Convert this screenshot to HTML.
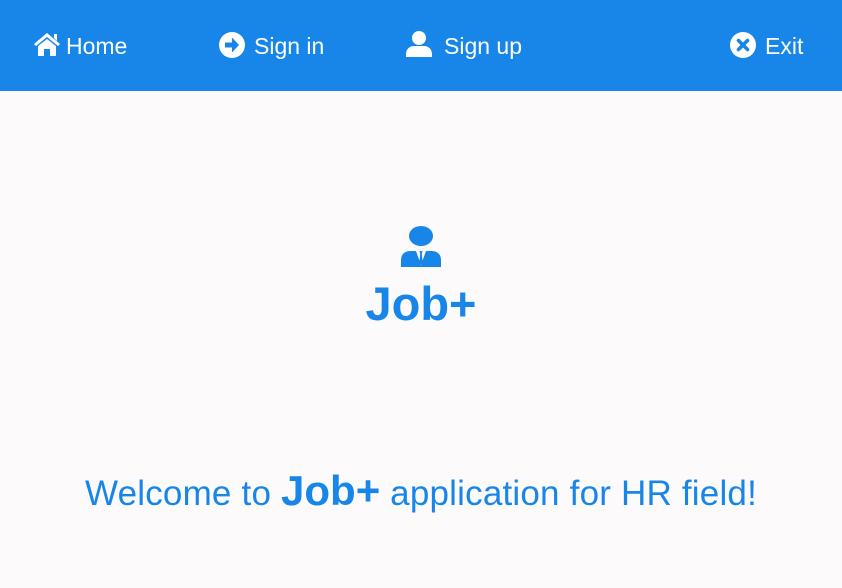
<!DOCTYPE html>
<html><head><meta charset="utf-8"><style>
*{margin:0;padding:0;box-sizing:border-box}
body{width:842px;height:588px;background:#fcfafb;font-family:"Liberation Sans",sans-serif;position:relative;overflow:hidden}
.nav{position:absolute;left:0;top:0;width:842px;height:91px;background:#1886e9}
.it{position:absolute;top:31px;color:#fff;font-size:23px;line-height:30px;white-space:nowrap}
.blue{color:#1886e9}
</style></head><body>
<div class="nav">
 <div class="it" style="left:66px">Home</div>
 <svg style="position:absolute;left:33px;top:31px" width="28" height="26" viewBox="0 0 28 26"><path d="M14 2 L1 13 L3 15 L14 6 L25 15 L27 13 Z M21 3 h3 v7 l-3 -3Z" fill="#fff"/><path d="M5 15 L14 8 L23 15 V25 H17 V18 H11 V25 H5Z" fill="#fff"/></svg>
 <div class="it" style="left:254px">Sign in</div>
 <svg style="position:absolute;left:219px;top:32px" width="26" height="26" viewBox="0 0 26 26"><circle cx="13" cy="13" r="13" fill="#fff"/><path d="M6 10.5h7v-5l7 7.5-7 7.5v-5H6z" fill="#1886e9"/></svg>
 <div class="it" style="left:444px">Sign up</div>
 <svg style="position:absolute;left:405px;top:30px" width="28" height="28" viewBox="0 0 28 28"><circle cx="14" cy="8" r="7" fill="#fff"/><path d="M1 27v-3c0-5 4-8 8-8h10c4 0 8 3 8 8v3z" fill="#fff"/></svg>
 <div class="it" style="left:765px">Exit</div>
 <svg style="position:absolute;left:730px;top:32px" width="26" height="26" viewBox="0 0 26 26"><circle cx="13" cy="13" r="13" fill="#fff"/><path d="M8.5 8.5l9 9M17.5 8.5l-9 9" stroke="#1886e9" stroke-width="3.6" stroke-linecap="round"/></svg>
</div>
<svg style="position:absolute;left:400px;top:226px" width="42" height="41" viewBox="0 0 42 41"><ellipse cx="21" cy="10" rx="12" ry="10" fill="#1886e9"/><path d="M1 41v-7c0-6 4-9 10-9h20c6 0 10 3 10 9v7z" fill="#1886e9"/><path d="M16 25h10l-5 14z" fill="#fcfafb"/><path d="M19.5 25h3l-0.7 3 0.9 8-1.7 2.5-1.7-2.5 0.9-8z" fill="#1886e9"/></svg>
<div class="blue" style="position:absolute;left:0;width:842px;text-align:center;top:276px;font-size:47px;font-weight:bold;line-height:56px">Job+</div>
<div class="blue" style="position:absolute;left:0;width:842px;text-align:center;top:466px;font-size:35px;letter-spacing:0.2px;line-height:50px;white-space:nowrap">Welcome to <b style="font-size:42px;letter-spacing:0">Job+</b> application for HR field!</div>
</body></html>
